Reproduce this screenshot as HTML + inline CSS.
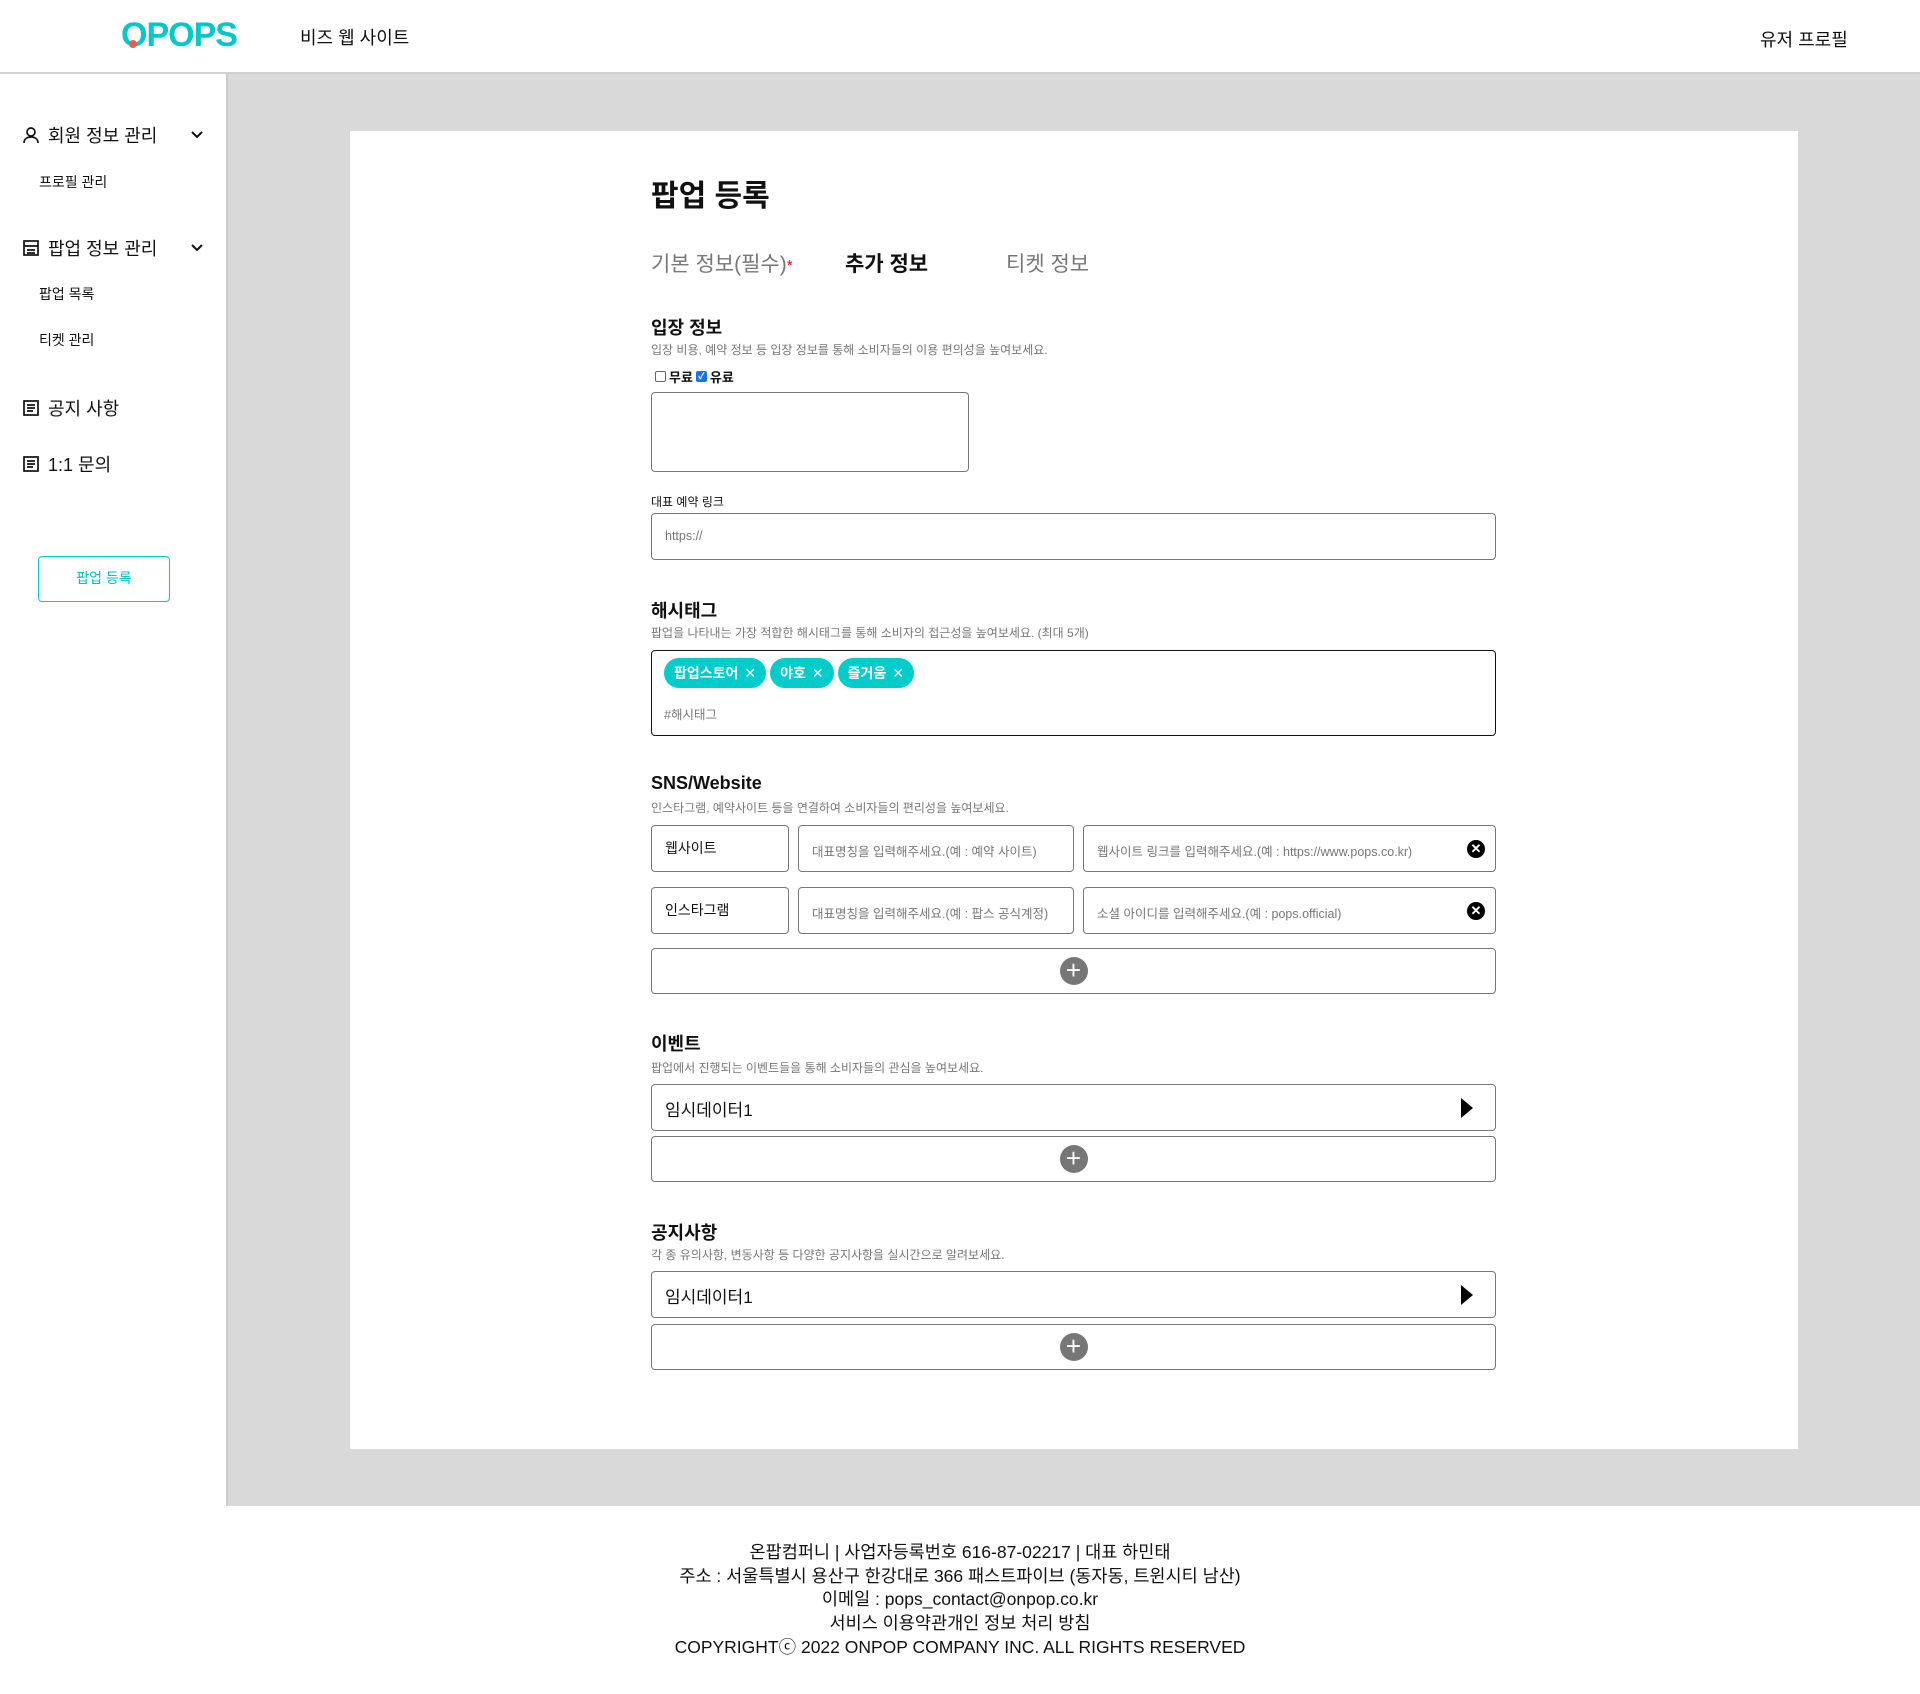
<!DOCTYPE html>
<html><head><meta charset="utf-8"><style>
*{box-sizing:border-box;margin:0;padding:0}
body{width:1920px;height:1694px;position:relative;background:#fff;font-family:"Liberation Sans","Noto Sans CJK KR",sans-serif;color:#111;overflow:hidden}
.a{position:absolute;white-space:nowrap}
.hdr{left:0;top:0;width:1920px;height:74px;border-bottom:2px solid #d0d0d0;background:#fff}
.gray{left:228px;top:74px;width:1692px;height:1432px;background:#d9d9d9}
.side{left:0;top:74px;width:228px;height:1432px;background:#fff;border-right:2px solid #ccc}
.card{left:350px;top:131px;width:1448px;height:1318px;background:#fff}
.box{position:absolute;border:1.5px solid #777;border-radius:4px;background:#fff}
.h{font-size:18px;font-weight:bold}
.d{font-size:12px;color:#777}
.ph{font-size:12.5px;color:#777}
.plus{position:absolute;width:28px;height:28px;border-radius:50%;background:#777;color:#fff;font-size:26px;line-height:27px;text-align:center;left:50%;top:50%;transform:translate(-50%,-50%)}
.tag{display:inline-block;height:30px;line-height:30px;background:#00cccc;color:#fff;border-radius:15px;padding:0 10px;font-size:14px;font-weight:bold;margin-right:4px}
.tag span{font-weight:normal;margin-left:6px}
.side .m{position:absolute;left:22px;font-size:18px;display:flex;align-items:center;gap:8px}
.side .s{position:absolute;left:39px;font-size:14px}
.foot{left:0;width:1920px;text-align:center;font-size:17.5px;color:#111}
.xc{position:absolute;right:10px;top:50%;transform:translateY(-50%);width:18px;height:18px;border-radius:50%;background:#000;color:#fff;font-size:13px;line-height:18px;text-align:center;font-weight:bold}
.tri{position:absolute;right:22px;top:50%;transform:translateY(-50%);width:0;height:0;border-left:12px solid #000;border-top:10px solid transparent;border-bottom:10px solid transparent}
</style></head><body>
<div class="a hdr"></div>
<div class="a" style="left:121px;top:16px;font-size:34px;font-weight:900;color:#00c8c8;letter-spacing:-1px;font-family:'Liberation Sans',sans-serif">OPOPS</div>
<div class="a" style="left:129px;top:40px;width:8px;height:8px;border-radius:50%;background:#f05a4a"></div>
<div class="a" style="left:300px;top:24px;font-size:18px">비즈 웹 사이트</div>
<div class="a" style="left:1760px;top:26px;font-size:18px">유저 프로필</div>

<div class="a gray"></div>
<div class="a side">
 <div class="m" style="top:48px"><svg width="18" height="18" viewBox="0 0 18 18" fill="none" stroke="#111" stroke-width="1.7"><circle cx="9" cy="6" r="4"/><path d="M2 17c0-4 3-6 7-6s7 2 7 6"/></svg>회원 정보 관리</div>
 <svg class="a" style="left:191px;top:57px" width="12" height="8" viewBox="0 0 12 8" fill="none" stroke="#111" stroke-width="2"><path d="M1 1l5 5 5-5"/></svg>
 <div class="s" style="top:98px">프로필 관리</div>
 <div class="m" style="top:161px"><svg width="18" height="18" viewBox="0 0 18 18" fill="none" stroke="#111" stroke-width="1.7"><rect x="2" y="2" width="14" height="14"/><path d="M2 7h14M5 11h8M5 14h8"/></svg>팝업 정보 관리</div>
 <svg class="a" style="left:191px;top:170px" width="12" height="8" viewBox="0 0 12 8" fill="none" stroke="#111" stroke-width="2"><path d="M1 1l5 5 5-5"/></svg>
 <div class="s" style="top:210px">팝업 목록</div>
 <div class="s" style="top:256px">티켓 관리</div>
 <div class="m" style="top:321px"><svg width="18" height="18" viewBox="0 0 18 18" fill="none" stroke="#111" stroke-width="1.7"><rect x="2" y="2" width="14" height="14"/><path d="M5 6h8M5 9h8M5 12h6"/></svg>공지 사항</div>
 <div class="m" style="top:377px"><svg width="18" height="18" viewBox="0 0 18 18" fill="none" stroke="#111" stroke-width="1.7"><rect x="2" y="2" width="14" height="14"/><path d="M5 6h8M5 9h8M5 12h6"/></svg>1:1 문의</div>
 <div class="a" style="left:38px;top:482px;width:132px;height:46px;border:1.5px solid #00cccc;border-radius:4px;color:#00c0c0;font-size:14px;text-align:center;line-height:43px">팝업 등록</div>
</div>
<div class="a card"></div>

<div class="a" style="left:651px;top:171px;font-size:30px;font-weight:bold">팝업 등록</div>
<div class="a" style="left:651px;top:248px;font-size:21px;color:#777">기본 정보(필수)<span style="color:red;font-size:15px;vertical-align:middle">*</span></div>
<div class="a" style="left:845px;top:248px;font-size:21px;font-weight:bold">추가 정보</div>
<div class="a" style="left:1006px;top:248px;font-size:21px;color:#777">티켓 정보</div>

<div class="a h" style="left:651px;top:314px">입장 정보</div>
<div class="a d" style="left:651px;top:341px">입장 비용, 예약 정보 등 입장 정보를 통해 소비자들의 이용 편의성을 높여보세요.</div>
<div class="a" style="left:655px;top:367px;font-size:13px;font-weight:bold;display:flex;align-items:center;gap:3px"><span style="display:inline-block;width:11px;height:11px;border:1px solid #666;border-radius:2px"></span>무료<span style="display:inline-block;width:11px;height:11px;background:#1a73e8;border-radius:2px;color:#fff;font-size:9px;line-height:11px;text-align:center">✓</span>유료</div>
<div class="box" style="left:651px;top:392px;width:318px;height:80px"></div>
<div class="a" style="left:651px;top:493px;font-size:12px">대표 예약 링크</div>
<div class="box" style="left:651px;top:513px;width:845px;height:47px"><div class="a ph" style="left:13px;top:15px">https://</div></div>

<div class="a h" style="left:651px;top:597px">해시태그</div>
<div class="a d" style="left:651px;top:624px">팝업을 나타내는 가장 적합한 해시태그를 통해 소비자의 접근성을 높여보세요. (최대 5개)</div>
<div class="box" style="left:651px;top:650px;width:845px;height:86px;border-color:#111">
 <div class="a" style="left:12px;top:7px"><span class="tag">팝업스토어<span>✕</span></span><span class="tag">야호<span>✕</span></span><span class="tag">즐거움<span>✕</span></span></div>
 <div class="a ph" style="left:12px;top:53px">#해시태그</div>
</div>

<div class="a h" style="left:651px;top:773px">SNS/Website</div>
<div class="a d" style="left:651px;top:799px">인스타그램, 예약사이트 등을 연결하여 소비자들의 편리성을 높여보세요.</div>
<div class="box" style="left:651px;top:825px;width:138px;height:47px"><div class="a" style="left:13px;top:12px;font-size:14px">웹사이트</div></div>
<div class="box" style="left:798px;top:825px;width:276px;height:47px"><div class="a ph" style="left:13px;top:15px">대표명칭을 입력해주세요.(예 : 예약 사이트)</div></div>
<div class="box" style="left:1083px;top:825px;width:413px;height:47px"><div class="a ph" style="left:13px;top:15px">웹사이트 링크를 입력해주세요.(예 : https://www.pops.co.kr)</div><div class="xc">✕</div></div>
<div class="box" style="left:651px;top:887px;width:138px;height:47px"><div class="a" style="left:13px;top:12px;font-size:14px">인스타그램</div></div>
<div class="box" style="left:798px;top:887px;width:276px;height:47px"><div class="a ph" style="left:13px;top:15px">대표명칭을 입력해주세요.(예 : 팝스 공식계정)</div></div>
<div class="box" style="left:1083px;top:887px;width:413px;height:47px"><div class="a ph" style="left:13px;top:15px">소셜 아이디를 입력해주세요.(예 : pops.official)</div><div class="xc">✕</div></div>
<div class="box" style="left:651px;top:948px;width:845px;height:46px"><div class="plus">+</div></div>

<div class="a h" style="left:651px;top:1030px">이벤트</div>
<div class="a d" style="left:651px;top:1059px">팝업에서 진행되는 이벤트들을 통해 소비자들의 관심을 높여보세요.</div>
<div class="box" style="left:651px;top:1084px;width:845px;height:47px"><div class="a" style="left:13px;top:11px;font-size:17px">임시데이터1</div><div class="tri"></div></div>
<div class="box" style="left:651px;top:1136px;width:845px;height:46px"><div class="plus">+</div></div>

<div class="a h" style="left:651px;top:1219px">공지사항</div>
<div class="a d" style="left:651px;top:1246px">각 종 유의사항, 변동사항 등 다양한 공지사항을 실시간으로 알려보세요.</div>
<div class="box" style="left:651px;top:1271px;width:845px;height:47px"><div class="a" style="left:13px;top:11px;font-size:17px">임시데이터1</div><div class="tri"></div></div>
<div class="box" style="left:651px;top:1324px;width:845px;height:46px"><div class="plus">+</div></div>

<div class="a foot" style="top:1541px;line-height:23.7px">온팝컴퍼니 | 사업자등록번호 616-87-02217 | 대표 하민태<br>주소 : 서울특별시 용산구 한강대로 366 패스트파이브 (동자동, 트윈시티 남산)<br>이메일 : pops_contact@onpop.co.kr<br>서비스 이용약관개인 정보 처리 방침<br>COPYRIGHTⓒ 2022 ONPOP COMPANY INC. ALL RIGHTS RESERVED</div>
</body></html>
